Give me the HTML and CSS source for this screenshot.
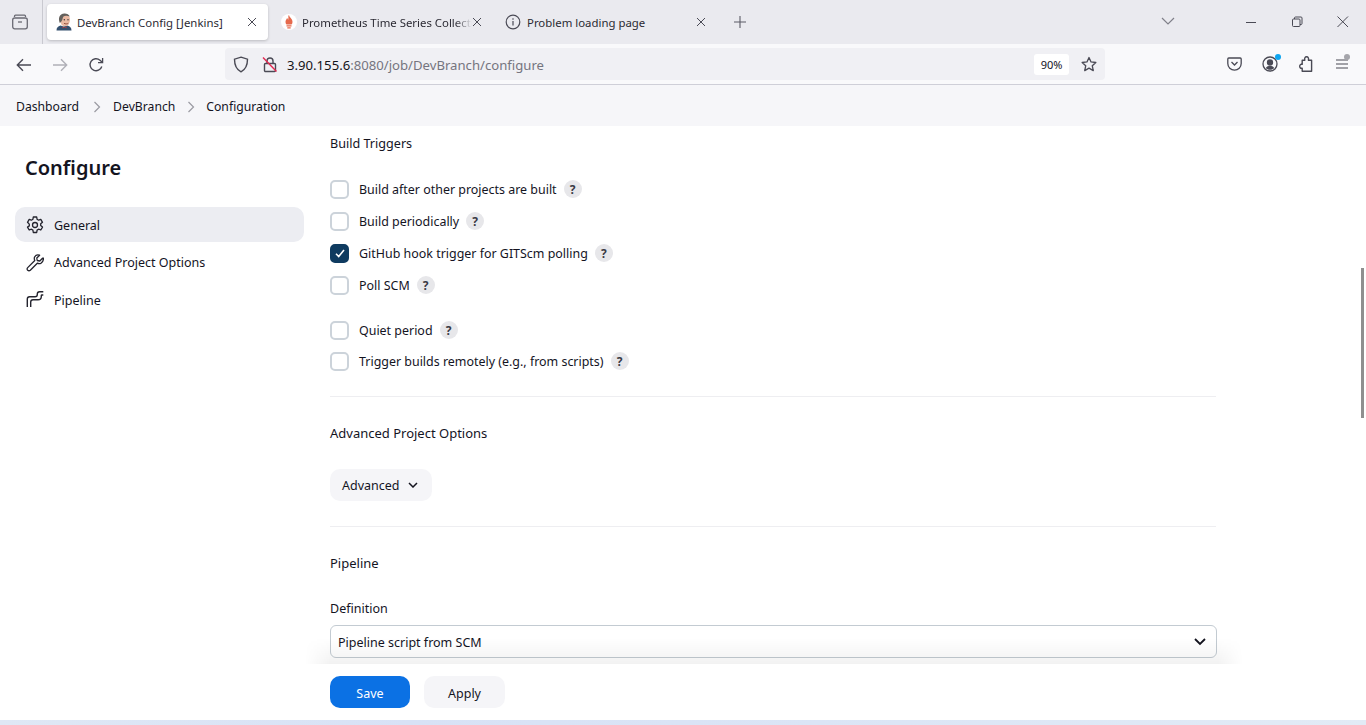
FILE: index.html
```html
<!DOCTYPE html>
<html lang="en">
<head>
<meta charset="UTF-8">
<meta name="viewport" content="width=device-width, initial-scale=1.0">
<title>DevBranch Config [Jenkins]</title>
<link rel="stylesheet" href="styles.css">
</head>
<body>
  <div class="browser-tabs">
    <div class="tab-view">
      <svg width="16" height="16" viewBox="0 0 16 16" fill="none" stroke="#6a6a73" stroke-width="1.300"><path d="M2.500 3V2.200a1 1 0 0 1 1-1h9a1 1 0 0 1 1 1V3"/><rect x=".7" y="4" width="14.600" height="10.800" rx="2"/><path d="M6 8h4"/></svg>
    </div>
    <div class="tab tab-active">
      <svg class="tab-icon" width="16" height="18" viewBox="0 0 16 18"><path d="M.5 17.500c0-3 1.500-4.300 4-5l3 1 4-1c2.500.7 4 2 4 5z" fill="#34506f"/><path d="M6.500 13.500l2 1.500 2-1.500v1.800l-2-.5-2 .5z" fill="#b93a3a"/><ellipse cx="9" cy="7" rx="5" ry="6.300" fill="#eab9a2"/><path d="M3.800 10C2 6 3 .6 8.500.6c2.500 0 4.500 1.200 5.300 3-2.500-1-5-1-6.300 0-1 1-.8 3-1.500 3.900-.5.700-1 1.500-2.200 2.500z" fill="#63605c"/><circle cx="8.300" cy="6.800" r=".7" fill="#333"/><circle cx="12" cy="6.800" r=".7" fill="#333"/><path d="M8 10.300c1.500.8 3 .8 4.300 0" stroke="#94503f" fill="none"/></svg>
      <span class="tab-title">DevBranch Config [Jenkins]</span>
      <svg class="tab-close" width="10" height="10" viewBox="0 0 10 10" stroke="#4a4a55" stroke-width="1"><path d="M1 1l8 8M9 1l-8 8"/></svg>
    </div>
    <div class="tab tab-prom">
      <svg class="tab-icon" width="16" height="16" viewBox="0 0 16 16"><circle cx="8" cy="8" r="8" fill="#fff"/><path d="M8.200 1.500c.3 2 3.300 3.200 3.300 6.400 0 1-.4 1.900-1 2.600h-5c-.6-.7-1-1.600-1-2.600 0-1.800 1.200-2.400 1.500-3.800.6.500 1 1.100 1.100 1.800.4-1.200.4-3 .1-4.400z" fill="#e6694c"/><path d="M5.500 11.200h5v1.300h-5zM6.300 13.200h3.400v1.400H6.300z" fill="#e6694c"/></svg>
      <span class="tab-title tab-fade">Prometheus Time Series Collection</span>
      <svg class="tab-close" width="10" height="10" viewBox="0 0 10 10" stroke="#4a4a55" stroke-width="1"><path d="M1 1l8 8M9 1l-8 8"/></svg>
    </div>
    <div class="tab tab-problem">
      <svg class="tab-icon" width="16" height="16" viewBox="0 0 16 16" fill="none" stroke="#4a4a55" stroke-width="1.200"><circle cx="8" cy="8" r="6.800"/><path d="M8 7v4.500M8 4.300v1.400"/></svg>
      <span class="tab-title">Problem loading page</span>
      <svg class="tab-close" width="10" height="10" viewBox="0 0 10 10" stroke="#4a4a55" stroke-width="1"><path d="M1 1l8 8M9 1l-8 8"/></svg>
    </div>
    <svg class="new-tab" width="14" height="14" viewBox="0 0 14 14" stroke="#5b5b66" stroke-width="1.100"><path d="M7 1v12M1 7h12"/></svg>
    <div class="tabs-right">
      <svg class="tab-list" width="14" height="8" viewBox="0 0 14 8" fill="none" stroke="#80808a" stroke-width="1.200"><path d="M1 1l6 6 6-6"/></svg>
      <div class="win-btn"><svg width="12" height="12" viewBox="0 0 12 12" stroke="#4a4a55" stroke-width="1"><path d="M1 6.500h10"/></svg></div>
      <div class="win-btn"><svg width="12" height="12" viewBox="0 0 12 12" fill="none" stroke="#4a4a55" stroke-width="1"><rect x="1.500" y="3" width="7.500" height="7.500" rx="1"/><path d="M3.500 3V2a1 1 0 0 1 1-1h5.500a1 1 0 0 1 1 1v5.500a1 1 0 0 1-1 1H9"/></svg></div>
      <div class="win-btn"><svg width="12" height="12" viewBox="0 0 12 12" stroke="#4a4a55" stroke-width="1"><path d="M.5.500l10.500 10.500M11 .5L.5 11"/></svg></div>
    </div>
  </div>

  <div class="browser-toolbar">
    <div class="nav-icons">
      <svg width="16" height="14" viewBox="0 0 16 14" fill="none" stroke="#4a4a55" stroke-width="1.400"><path d="M15 7H1.500M7 1.200 1.300 7 7 12.800"/></svg>
      <svg width="16" height="14" viewBox="0 0 16 14" fill="none" stroke="#b0b0b8" stroke-width="1.400"><path d="M1 7h13.500M9 1.200 14.700 7 9 12.800"/></svg>
      <svg width="16" height="16" viewBox="0 0 16 16" fill="none" stroke="#4a4a55" stroke-width="1.400"><path d="M13.800 9.500A6 6 0 1 1 12 3.200L14.300 5.200"/><path d="M14.600 1v4.600H10" stroke-width="1.300"/></svg>
    </div>
    <div class="url-bar">
      <svg class="url-shield" width="16" height="17" viewBox="0 0 16 17" fill="none" stroke="#4a4a55" stroke-width="1.400"><path d="M8 1.200 14.500 3.200c0 6-1.500 10-6.500 12.600C3 13.200 1.500 9.200 1.500 3.200z"/></svg>
      <svg class="url-lock" width="16" height="17" viewBox="0 0 16 17" fill="none" stroke="#4a4a55" stroke-width="1.400"><rect x="2.500" y="7.500" width="11" height="8" rx="1"/><path d="M5 7.500V5a3 3 0 0 1 6 0v2.500"/><path d="M1 1.500l13.500 14" stroke="#e22850"/></svg>
      <span class="url-host">3.90.155.6</span><span class="url-path">:8080/job/DevBranch/configure</span>
      <span class="zoom-badge">90%</span>
      <svg class="url-star" width="16" height="16" viewBox="0 0 18 17" fill="none" stroke="#4a4a55" stroke-width="1.500" stroke-linejoin="round"><path d="M9 1.200l2.300 5 5.400.6-4 3.700 1.100 5.400L9 13.200 4.200 15.900l1.100-5.400-4-3.700 5.400-.6z"/></svg>
    </div>
    <div class="tool-icons">
      <div class="tool-btn"><svg width="15" height="14" viewBox="0 0 15 14" fill="none" stroke="#4a4a55" stroke-width="1.300"><path d="M1.800 1h11.400c.5 0 1 .4 1 1v4.500a6.700 6.700 0 0 1-13.400 0V2c0-.6.500-1 1-1z"/><path d="M4.500 5 7.500 8l3-3"/></svg></div>
      <div class="tool-btn"><svg width="16" height="16" viewBox="0 0 16 16" fill="none" stroke="#4a4a55" stroke-width="1.300"><circle cx="8" cy="8" r="7"/><circle cx="8" cy="6.500" r="2.500" fill="#4a4a55"/><path d="M3.800 12c1-1.700 2.500-2 4.200-2s3.200.3 4.200 2c-1 1-2.500 1.800-4.200 1.800S4.800 13 3.800 12z" fill="#4a4a55" stroke="none"/></svg><i class="dot dot-blue"></i></div>
      <div class="tool-btn"><svg width="14" height="16" viewBox="0 0 14 16" fill="none" stroke="#4a4a55" stroke-width="1.400" stroke-linejoin="round"><path d="M3.200 4.200h2.600C5.300 2.200 6 .8 7.600.8s2.300 1.400 1.800 3.400h3.200v11.100H3.200v-3.100C1.500 12.600.7 11.600.7 10.300S1.500 8 3.200 8.400z"/></svg></div>
      <div class="tool-btn"><svg width="14" height="12" viewBox="0 0 14 12" stroke="#4a4a55" stroke-width="1.200"><path d="M1 2h12M1 6h12M1 10h12"/></svg><i class="dot dot-grey"></i></div>
    </div>
  </div>

  <div class="breadcrumbs">
    <a>Dashboard</a>
    <svg width="8" height="12" viewBox="0 0 8 12" fill="none" stroke="#9a9aa2" stroke-width="1.200"><path d="M1.500 1 6.500 6l-5 5"/></svg>
    <a>DevBranch</a>
    <svg class="crumb-last" width="8" height="12" viewBox="0 0 8 12" fill="none" stroke="#9a9aa2" stroke-width="1.200"><path d="M1.500 1 6.500 6l-5 5"/></svg>
    <a>Configuration</a>
  </div>

  <div class="page">
    <aside class="sidebar">
      <h1>Configure</h1>
      <div class="side-item side-active">
        <svg width="18" height="18" viewBox="0 0 18 18" fill="none" stroke="#24242e" stroke-width="1.300" stroke-linejoin="round"><path d="M7.300 1h3.400l.4 2.300 1.500.9 2.200-.8 1.700 2.900-1.800 1.500v1.800l1.800 1.500-1.700 2.900-2.200-.8-1.500.9-.4 2.400H7.300l-.4-2.400-1.500-.9-2.200.8-1.700-2.900L3.300 9.900V8.100L1.500 6.300l1.700-2.900 2.200.8 1.500-.9z"/><circle cx="9" cy="9" r="2.500"/></svg>
        <span>General</span>
      </div>
      <div class="side-item">
        <svg width="18" height="18" viewBox="0 0 18 18" fill="none" stroke="#24242e" stroke-width="1.300" stroke-linejoin="round"><path d="M16.500 4.200 13.800 7 11.200 6.500 10.800 4l2.800-2.800c-2-.6-4.200 0-5 1.800-.5 1.200-.3 2.500.2 3.500L1.700 13.600c-.8.800-.8 1.900 0 2.600s1.800.7 2.600 0l7-7c1 .5 2.300.6 3.500.1 1.800-.8 2.600-3 2.700-5.100z"/></svg>
        <span>Advanced Project Options</span>
      </div>
      <div class="side-item">
        <svg width="18" height="18" viewBox="0 2 18 18" overflow="visible" fill="none" stroke="#24242e" stroke-width="1.400"><path d="M1.300 17V9Q1.300 6.700 3.600 6.700H9Q11.300 6.700 11.300 4.400V4Q11.300 1.700 13.600 1.700h3.700"/><path d="M4.700 17v-5Q4.700 9.700 7 9.700h5Q15.300 9.700 15.300 6.400v-.9Q15.300 5 16 5h1.300"/></svg>
        <span>Pipeline</span>
      </div>
    </aside>

    <main class="main">
      <h2 class="section-title first">Build Triggers</h2>
      <div class="checks">
        <label class="check"><span class="box"></span>Build after other projects are built<span class="help">?</span></label>
        <label class="check"><span class="box"></span>Build periodically<span class="help">?</span></label>
        <label class="check"><span class="box box-on"><svg width="10" height="9" viewBox="0 0 10 9" fill="none" stroke="#fff" stroke-width="1.600"><path d="M1 4.800 3.700 7.500 9 1"/></svg></span>GitHub hook trigger for GITScm polling<span class="help">?</span></label>
        <label class="check"><span class="box"></span>Poll SCM<span class="help">?</span></label>
      </div>
      <div class="checks checks-second">
        <label class="check"><span class="box"></span>Quiet period<span class="help">?</span></label>
        <label class="check"><span class="box"></span>Trigger builds remotely (e.g., from scripts)<span class="help">?</span></label>
      </div>
      <hr class="divider">
      <h2 class="section-title">Advanced Project Options</h2>
      <button class="advanced">Advanced
        <svg width="10" height="6" viewBox="0 0 10 6" fill="none" stroke="#14141f" stroke-width="1.500"><path d="M1 1l4 4 4-4"/></svg>
      </button>
      <hr class="divider">
      <h2 class="section-title">Pipeline</h2>
      <div class="field-label">Definition</div>
      <div class="select">
        <span>Pipeline script from SCM</span>
        <svg width="12" height="8" viewBox="0 0 12 8" fill="none" stroke="#14141f" stroke-width="1.800"><path d="M1 1l5 5 5-5"/></svg>
      </div>
    </main>
  </div>

  <div class="bottom-bar">
    <div class="bottom-shade"></div>
    <button class="btn btn-save">Save</button>
    <button class="btn btn-apply">Apply</button>
  </div>
  <div class="taskbar-edge"></div>
  <div class="scroll-thumb"></div>
</body>
</html>
```

FILE: styles.css
```css
* {
  box-sizing: border-box;
}

html, body {
  height: 100%;
}

body {
  margin: 0;
  display: flex;
  flex-direction: column;
  overflow: hidden;
  background-color: #ffffff;
  color: #14141f;
  font-family: "Noto Sans", "Open Sans", sans-serif;
  font-size: 13px;
}

/* browser chrome */
.browser-tabs {
  height: 44px;
  flex: none;
  display: flex;
  align-items: center;
  background-color: #eaeaef;
  color: #2b2a33;
  font-size: 11.400px;
}

.tab-view {
  width: 43px;
  height: 44px;
  padding-right: 3px;
  display: flex;
  align-items: center;
  justify-content: center;
  border-right: 1px solid #c9c9d0;
}

.tab {
  display: flex;
  align-items: center;
  height: 36px;
  flex: none;
}

.tab-active {
  width: 221px;
  margin-left: 4px;
  padding: 0 11px 0 9px;
  background-color: #ffffff;
  border-radius: 4px;
  box-shadow: 0 1px 3px rgba(0, 0, 0, 0.2);
}

.tab-prom {
  width: 218px;
  padding: 0 4px 0 13px;
}

.tab-problem {
  width: 244px;
  padding: 0 24px 0 19px;
}

.tab-icon {
  flex: none;
  margin-right: 5px;
}

.tab-title {
  flex: 1;
  white-space: nowrap;
  overflow: hidden;
}

.tab-problem .tab-title {
  margin-left: 1px;
}

.tab-fade {
  -webkit-mask-image: linear-gradient(to right, #000 90%, transparent);
  mask-image: linear-gradient(to right, #000 90%, transparent);
}

.tab-close {
  flex: none;
}

.new-tab {
  margin-left: 3px;
}

.tabs-right {
  margin-left: auto;
  display: flex;
  align-items: center;
}

.tab-list {
  margin-right: 53px;
  margin-top: -2px;
}

.win-btn {
  width: 46px;
  height: 44px;
  display: flex;
  align-items: center;
  justify-content: center;
}

.browser-toolbar {
  height: 41px;
  flex: none;
  display: flex;
  align-items: center;
  background-color: #f9f9fb;
  border-bottom: 1px solid #cfcfd8;
}

.nav-icons {
  width: 225px;
  padding: 1px 0 0 16px;
  display: flex;
  align-items: center;
  gap: 20px;
}

.url-bar {
  width: 880px;
  height: 32px;
  display: flex;
  align-items: center;
  padding: 0 8px;
  background-color: #f0f0f4;
  border-radius: 4px;
  font-size: 13.150px;
}

.url-shield {
  margin-right: 13px;
}

.url-lock {
  margin-right: 9px;
}

.url-host {
  color: #15141a;
  padding-top: 2px;
}

.url-path {
  color: #75757f;
  padding-top: 2px;
}

.zoom-badge {
  margin-left: auto;
  width: 35px;
  height: 21px;
  display: flex;
  align-items: center;
  justify-content: center;
  background-color: #ffffff;
  border-radius: 3px;
  font-size: 11px;
}

.url-star {
  margin-left: 12px;
}

.tool-icons {
  margin-left: auto;
  display: flex;
  padding-right: 6px;
}

.tool-btn {
  position: relative;
  width: 36px;
  height: 32px;
  display: flex;
  align-items: center;
  justify-content: center;
}

.dot {
  position: absolute;
  width: 6px;
  height: 6px;
  border-radius: 50%;
}

.dot-blue {
  top: 6px;
  right: 7px;
  background-color: #0ea5f0;
}

.dot-grey {
  top: 6px;
  right: 10px;
  background-color: #a5a5ab;
}

/* jenkins page */
.breadcrumbs {
  height: 41px;
  flex: none;
  display: flex;
  align-items: center;
  padding: 2px 0 0 16px;
  background-color: #f6f6f9;
  font-size: 12.200px;
}

.breadcrumbs svg {
  margin: 0 12px;
}

.breadcrumbs .crumb-last {
  margin-right: 11px;
}

.breadcrumbs a:first-child {
  margin-right: 2px;
}

.page {
  flex: 1;
  min-height: 0;
  display: flex;
  overflow: hidden;
}

.sidebar {
  width: 330px;
  flex: none;
  padding: 27px 26px 0 15px;
}

.sidebar h1 {
  margin: 0 0 24px 10px;
  font-size: 20px;
  line-height: 30px;
  font-weight: 600;
}

.side-item {
  height: 35px;
  margin-bottom: 3px;
  display: flex;
  align-items: center;
  gap: 10px;
  padding-left: 11px;
  border-radius: 10px;
  font-size: 12.500px;
}

.side-active {
  background-color: #ecedf2;
}

.side-active span {
  padding-top: 2px;
}

.main {
  width: 886px;
  flex: none;
}

.section-title {
  margin: 0;
  font-size: 13px;
  font-weight: 400;
  line-height: 18px;
}

.first {
  margin-top: 9px;
  font-size: 12.600px;
}

.checks {
  margin-top: 26px;
  display: flex;
  flex-direction: column;
  gap: 12px;
}

.checks-second {
  margin-top: 25px;
  gap: 11px;
}

.check {
  height: 20px;
  display: flex;
  align-items: center;
  font-size: 12.450px;
}

.box {
  width: 19px;
  height: 19px;
  margin-right: 10px;
  display: flex;
  align-items: center;
  justify-content: center;
  border: 2px solid #ccd3da;
  border-radius: 5px;
  background-color: #ffffff;
}

.box-on {
  background-color: #0f3b60;
  border-color: #0f3b60;
}

.help {
  width: 18px;
  height: 18px;
  margin-left: 7px;
  display: flex;
  align-items: center;
  justify-content: center;
  background-color: #e7e7ea;
  border-radius: 50%;
  font-size: 12px;
  font-weight: 700;
  color: #3a3a44;
}

.divider {
  margin: 25px 0 27px;
  border: none;
  border-top: 1px solid #eeeef1;
}

.advanced {
  margin-top: 27px;
  height: 32px;
  width: 102px;
  display: flex;
  align-items: center;
  gap: 8px;
  padding: 0 0 0 12px;
  border: none;
  border-radius: 10px;
  background-color: #f5f5f8;
  color: #14141f;
  font: inherit;
  font-size: 12.500px;
}

.field-label {
  margin-top: 28px;
  font-size: 12.500px;
  line-height: 18px;
}

.select {
  margin: 7px -1px 0 0;
  height: 33px;
  display: flex;
  align-items: center;
  justify-content: space-between;
  padding: 0 10px 0 7px;
  border: 1px solid #c3cbd2;
  border-radius: 6px;
  font-size: 12.500px;
}

.select span {
  padding-top: 2px;
}

.bottom-bar {
  position: relative;
  height: 56px;
  flex: none;
  display: flex;
  align-items: center;
  gap: 14px;
  padding-left: 330px;
  background-color: #ffffff;
}

/* the sticky bar's shadow, lying over the form above it */
.bottom-shade {
  position: absolute;
  left: 305px;
  right: 123px;
  bottom: 100%;
  height: 26px;
  background: linear-gradient(to bottom, rgba(0, 0, 0, 0), rgba(0, 0, 0, 0.05));
  -webkit-mask-image: linear-gradient(to right, transparent, #000 25px, #000 calc(100% - 25px), transparent);
  mask-image: linear-gradient(to right, transparent, #000 25px, #000 calc(100% - 25px), transparent);
  pointer-events: none;
}

.btn {
  height: 32px;
  width: 80px;
  padding: 2px 0 0;
  border: none;
  border-radius: 10px;
  font: inherit;
  font-size: 12.500px;
}

.btn-save {
  background-color: #0b71e4;
  color: #ffffff;
}

.btn-apply {
  width: 81px;
  background-color: #f5f5f8;
  color: #14141f;
}

.taskbar-edge {
  height: 5px;
  flex: none;
  background: linear-gradient(to right, #dfe8f5, #d8e2f6 30%, #dbe5f6 60%, #e2ebf6);
}

.scroll-thumb {
  position: absolute;
  top: 268px;
  left: 1361px;
  width: 3px;
  height: 150px;
  background-color: #8f8f8f;
}
```
